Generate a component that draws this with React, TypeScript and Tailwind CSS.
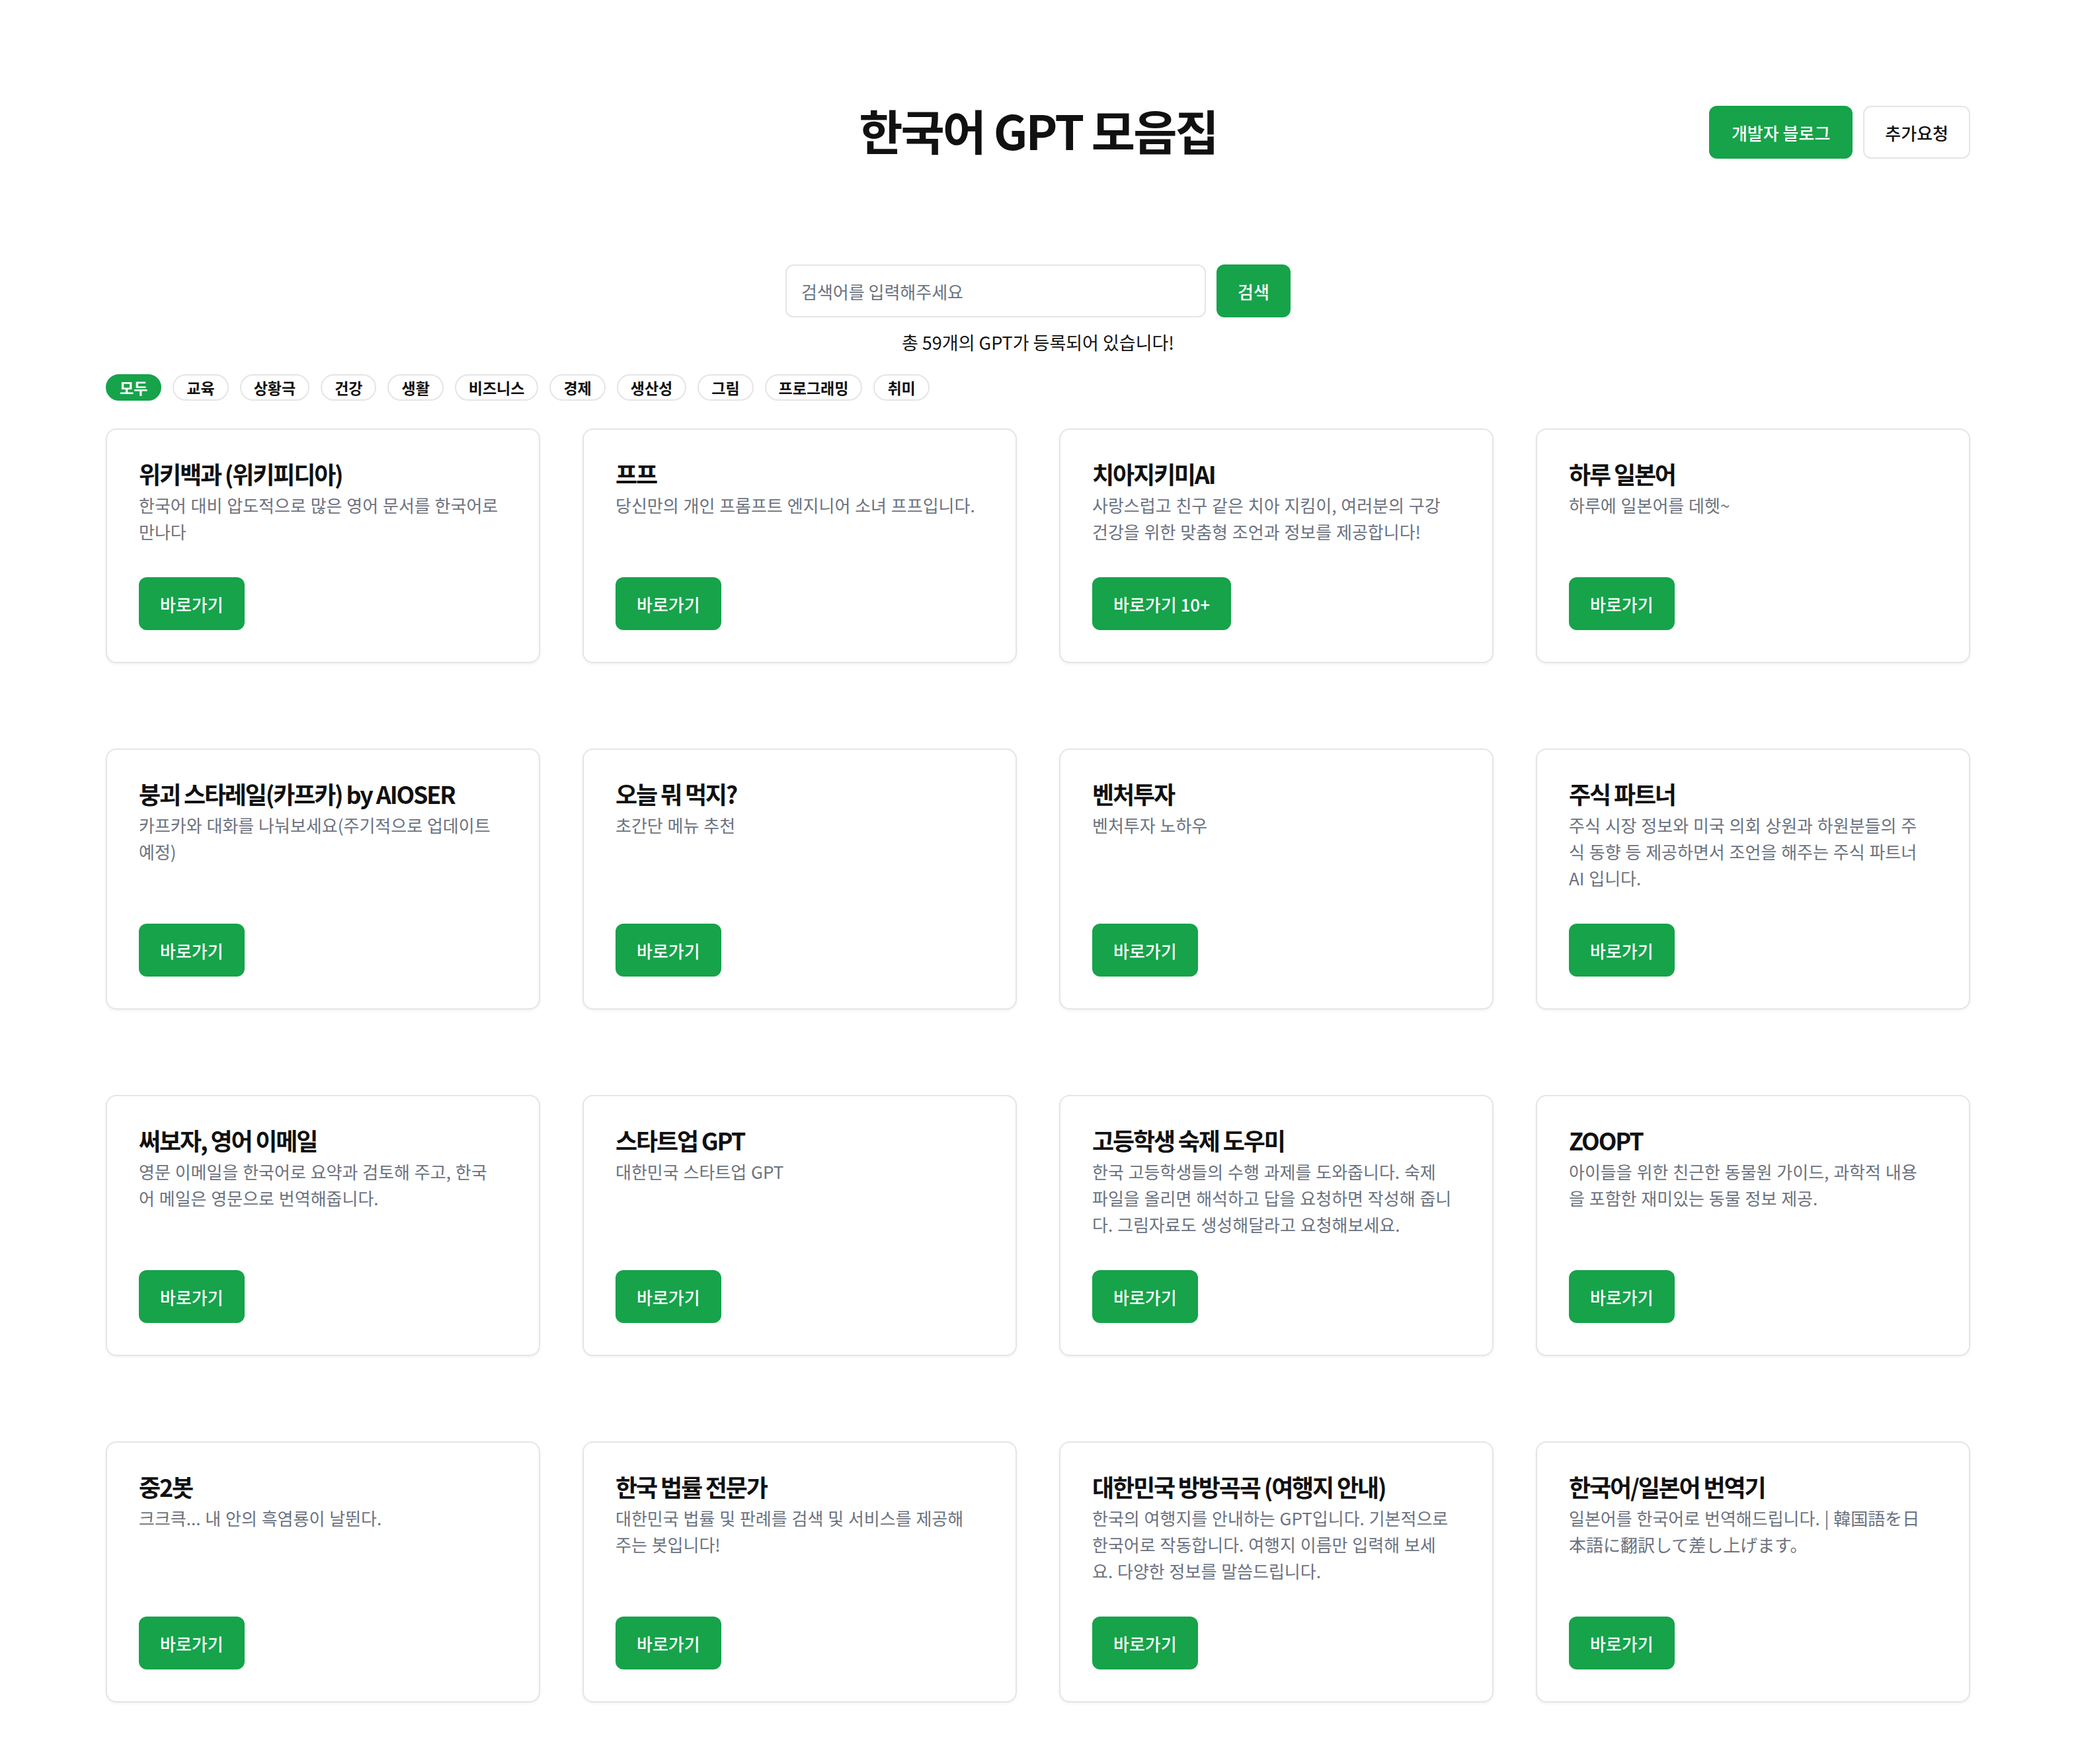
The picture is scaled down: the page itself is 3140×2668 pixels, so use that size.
import React from "react";

type Gpt = {
  title: string;
  desc: string;
  badge?: string;
};

// 카드 설명은 원본 줄바꿈 위치를 그대로 유지 (whitespace-pre-line)
const GPTS: Gpt[] = [
  {
    title: "위키백과 (위키피디아)",
    desc: "한국어 대비 압도적으로 많은 영어 문서를 한국어로\n만나다",
  },
  { title: "프프", desc: "당신만의 개인 프롬프트 엔지니어 소녀 프프입니다." },
  {
    title: "치아지키미AI",
    desc: "사랑스럽고 친구 같은 치아 지킴이, 여러분의 구강\n건강을 위한 맞춤형 조언과 정보를 제공합니다!",
    badge: "10+",
  },
  { title: "하루 일본어", desc: "하루에 일본어를 데헷~" },
  {
    title: "붕괴 스타레일(카프카) by AIOSER",
    desc: "카프카와 대화를 나눠보세요(주기적으로 업데이트\n예정)",
  },
  { title: "오늘 뭐 먹지?", desc: "초간단 메뉴 추천" },
  { title: "벤처투자", desc: "벤처투자 노하우" },
  {
    title: "주식 파트너",
    desc: "주식 시장 정보와 미국 의회 상원과 하원분들의 주\n식 동향 등 제공하면서 조언을 해주는 주식 파트너\nAI 입니다.",
  },
  {
    title: "써보자, 영어 이메일",
    desc: "영문 이메일을 한국어로 요약과 검토해 주고, 한국\n어 메일은 영문으로 번역해줍니다.",
  },
  { title: "스타트업 GPT", desc: "대한민국 스타트업 GPT" },
  {
    title: "고등학생 숙제 도우미",
    desc: "한국 고등학생들의 수행 과제를 도와줍니다. 숙제\n파일을 올리면 해석하고 답을 요청하면 작성해 줍니\n다. 그림자료도 생성해달라고 요청해보세요.",
  },
  {
    title: "ZOOPT",
    desc: "아이들을 위한 친근한 동물원 가이드, 과학적 내용\n을 포함한 재미있는 동물 정보 제공.",
  },
  { title: "중2봇", desc: "크크큭... 내 안의 흑염룡이 날뛴다." },
  {
    title: "한국 법률 전문가",
    desc: "대한민국 법률 및 판례를 검색 및 서비스를 제공해\n주는 봇입니다!",
  },
  {
    title: "대한민국 방방곡곡 (여행지 안내)",
    desc: "한국의 여행지를 안내하는 GPT입니다. 기본적으로\n한국어로 작동합니다. 여행지 이름만 입력해 보세\n요. 다양한 정보를 말씀드립니다.",
  },
  {
    title: "한국어/일본어 번역기",
    desc: "일본어를 한국어로 번역해드립니다. | 韓国語を日\n本語に翻訳して差し上げます。",
  },
];

const CATEGORIES = [
  "모두",
  "교육",
  "상황극",
  "건강",
  "생활",
  "비즈니스",
  "경제",
  "생산성",
  "그림",
  "프로그래밍",
  "취미",
];

function GptCard({ gpt }: { gpt: Gpt }) {
  return (
    <div className="flex flex-col rounded-[16px] border-2 border-[#e5e5e5] bg-white px-[48px] pb-[48px] pt-[38px] shadow-[0_2px_4px_rgba(0,0,0,0.05)]">
      <h2 className="text-[36px] font-bold leading-[56px] tracking-[-0.06em] text-[#111]">
        {gpt.title}
      </h2>
      <p className="flex-1 whitespace-pre-line text-[26px] leading-[40px] text-[#6b7280] [word-spacing:1px]">
        {gpt.desc}
      </p>
      <div className="mt-[49px]">
        <button className="h-[80px] rounded-[12px] bg-[#16a34a] px-[32px] text-[26px] font-medium text-white">
          바로가기{gpt.badge ? ` ${gpt.badge}` : ""}
        </button>
      </div>
    </div>
  );
}

export default function App() {
  return (
    <div className="min-h-screen bg-white px-[160px] pb-[96px] pt-[160px] font-['Noto_Sans_CJK_KR','Noto_Sans_CJK_JP',sans-serif] text-[#111]">
      <header className="grid h-[80px] grid-cols-3 items-center">
        <div />
        <h1 className="pb-[8px] text-center text-[72px] font-bold leading-[72px] tracking-[-0.04em]">
          한국어 GPT 모음집
        </h1>
        <div className="flex justify-end gap-[16px]">
          <button className="h-[80px] rounded-[12px] bg-[#16a34a] px-[34px] text-[26px] font-medium text-white">
            개발자 블로그
          </button>
          <button className="h-[80px] rounded-[12px] border-2 border-[#e5e5e5] bg-white px-[31px] text-[26px] font-medium text-[#111]">
            추가요청
          </button>
        </div>
      </header>

      <div className="mt-[160px] flex justify-center gap-[16px]">
        <input
          type="text"
          placeholder="검색어를 입력해주세요"
          className="h-[80px] w-[636px] rounded-[12px] border-2 border-[#e5e5e5] px-[22px] text-[26px] text-[#111] outline-none placeholder:text-[#6b7280]"
        />
        <button className="h-[80px] w-[112px] rounded-[12px] bg-[#16a34a] text-[26px] font-medium text-white">
          검색
        </button>
      </div>

      <p className="mt-[18px] text-center text-[27px] leading-[40px] text-[#111]">
        총 59개의 GPT가 등록되어 있습니다!
      </p>

      <nav className="mt-[28px] flex flex-wrap gap-[17px]">
        {CATEGORIES.map((c, i) => (
          <button
            key={c}
            className={
              i === 0
                ? "flex h-[40px] items-center rounded-full border-2 border-[#16a34a] bg-[#16a34a] px-[19px] text-[23px] font-semibold text-white"
                : "flex h-[40px] items-center rounded-full border-2 border-[#e5e5e5] bg-white px-[19px] text-[23px] font-semibold text-[#111]"
            }
          >
            {c}
          </button>
        ))}
      </nav>

      <main className="mt-[42px] grid grid-cols-4 gap-x-[64px] gap-y-[129px]">
        {GPTS.map((g) => (
          <GptCard key={g.title} gpt={g} />
        ))}
      </main>
    </div>
  );
}
